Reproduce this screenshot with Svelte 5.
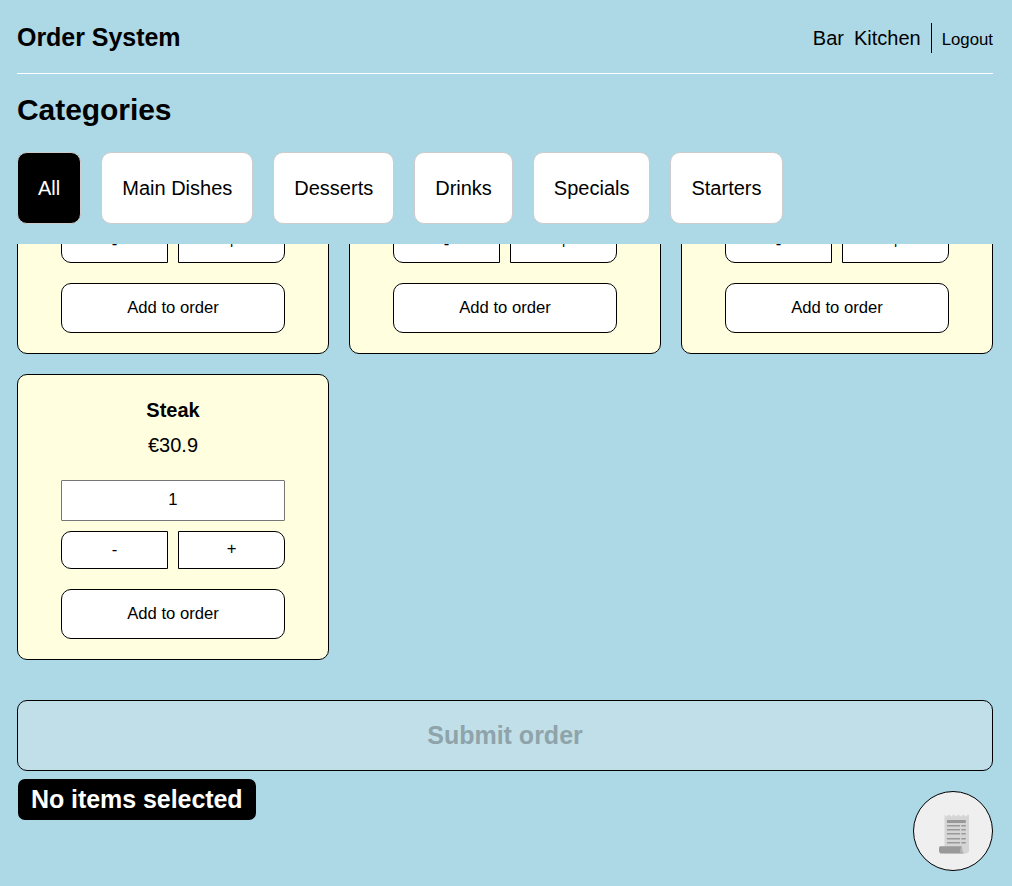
<script>
  const categories = ['All', 'Main Dishes', 'Desserts', 'Drinks', 'Specials', 'Starters'];
  let selected = $state('All');
  let items = $state([
    { id: 1 },
    { id: 2 },
    { id: 3 },
    { id: 4, name: 'Steak', price: 30.9, quantity: 1 }
  ]);
  const rules = [11, 15, 19, 24, 28];
</script>

<div class="page">
  <header>
    <h1>Order System</h1>
    <nav>
      <a href="#bar">Bar</a>
      <a href="#kitchen">Kitchen</a>
      <button class="logout">Logout</button>
    </nav>
  </header>

  <h2>Categories</h2>
  <div class="categories">
    {#each categories as c}
      <button class="category" class:active={selected === c} onclick={() => (selected = c)}>{c}</button>
    {/each}
  </div>

  <main>
    <div class="grid">
      {#each items as item (item.id)}
        <article>
          {#if item.name}
            <h3>{item.name}</h3>
            <p>€{item.price}</p>
            <input type="text" bind:value={item.quantity} />
          {/if}
          <div class="steps">
            <button class="minus">-</button>
            <button class="plus">+</button>
          </div>
          <button class="add">Add to order</button>
        </article>
      {/each}
    </div>
  </main>

  <button class="submit" disabled>Submit order</button>
  <footer>
    <strong>No items selected</strong>
    <button class="receipt">
      <svg width="30" height="40" viewBox="0 0 30 40">
        <path d="M5.5 0.6l2 2 2.4-2 2.4 2 2.4-2 2.4 2 2.4-2 2.4 2 2.4-2 2.4 2 2.4-2 1.0.6V36q0 3.6-3.8 3.6H5.5z" fill="#d5d5d5" />
        <path d="M1.4 32.2h21.2v4q0 2 1.4 3.4H2.5Q0 39.6 0 36.5v-2.8q0-1.5 1.4-1.5z" fill="#999" />
        <path d="M22 32.2q1.2 0 1.2 2.3 0 3.4 2 5.1h-2.9q-1.3-1-1.3-3z" fill="#b5b5b5" />
        <path d="M8 6h18.8v3H8z" fill="#999" />
        {#each rules as y}
          <path d="M8 {y}h13v1.4H8zM22.3 {y}h4.5v1.4h-4.5z" fill="#999" />
        {/each}
      </svg>
    </button>
  </footer>
</div>

<style>
  :global(body) { margin: 0; background: #add8e6; }
  * { box-sizing: border-box; }
  .page {
    height: 886px;
    padding: 0 19px 0 17px;
    display: flex;
    flex-direction: column;
    font-family: "Liberation Sans", Arial, sans-serif;
    font-size: 20px;
    color: #000;
    overflow: hidden;
  }
  h1, h2, h3, p { margin: 0; }
  button, input { font-family: inherit; color: #000; margin: 0; }
  header {
    height: 74px;
    border-bottom: 1px solid #fff;
    display: flex;
    justify-content: space-between;
    align-items: center;
    flex: none;
    padding-top: 3px;
  }
  h1 { font-size: 25px; line-height: 30px; padding-bottom: 3px; letter-spacing: -0.04px; }
  nav { display: flex; align-items: center; gap: 10px; }
  nav a { color: #000; text-decoration: none; line-height: 30px; }
  .logout {
    border: 0;
    border-left: 1px solid #000;
    background: none;
    height: 30px;
    padding: 4px 0 0 10px;
    font-size: 16.8px;
  }
  h2 { font-size: 30px; line-height: 36px; height: 36px; margin: 18px 0 24px; flex: none; letter-spacing: -0.06px; }
  .categories { display: flex; gap: 20px; flex: none; }
  .category {
    height: 72px;
    padding: 0 20px;
    border: 1px solid #ccc;
    border-radius: 10px;
    background: #fff;
    font-size: 20px;
  }
  .category.active { background: #000; color: #fff; }
  main {
    height: 416px;
    margin: 20px 0 40px;
    flex: none;
    display: flex;
    flex-direction: column;
    justify-content: flex-end;
    overflow: hidden;
  }
  .grid { display: grid; grid-template-columns: repeat(3, 1fr); gap: 20px; }
  article {
    height: 286px;
    padding: 20px 43px;
    border: 1px solid #000;
    border-radius: 10px;
    background: #ffffe0;
    display: flex;
    flex-direction: column;
    justify-content: flex-end;
    text-align: center;
  }
  h3 { font-size: 20px; line-height: 30px; margin-bottom: 5px; }
  p { line-height: 30px; margin-bottom: 20px; }
  input {
    width: 100%;
    height: 41px;
    border: 1px solid #767676;
    border-radius: 1px;
    background: #fff;
    padding: 0 0 2px;
    text-align: center;
    font-size: 16.67px;
    margin-bottom: 10px;
  }
  .steps { display: grid; grid-template-columns: 1fr 1fr; gap: 10px; margin-bottom: 20px; }
  .steps button, .add { border: 1px solid #000; background: #fff; font-size: 16.67px; padding: 0 0 1px; }
  .steps button { height: 38px; }
  .minus { border-radius: 10px 0 0 10px; }
  .steps .plus { border-radius: 0 10px 10px 0; padding-bottom: 3px; }
  .add { height: 50px; border-radius: 10px; }
  .submit {
    height: 71px;
    flex: none;
    border: 1px solid #000;
    border-radius: 10px;
    background: #c1dfe8;
    color: #8fa3aa;
    font-size: 25px;
    font-weight: bold;
  }
  footer { display: flex; justify-content: space-between; align-items: flex-start; padding: 8px 0 0 1px; }
  strong {
    height: 41px;
    padding: 0 13px;
    line-height: 40px;
    font-size: 25px;
    letter-spacing: -0.06px;
    border-radius: 7px;
    background: #000;
    color: #fff;
  }
  .receipt {
    width: 80px;
    height: 80px;
    margin-top: 12px;
    padding: 6px 0 0 2px;
    border: 1px solid #000;
    border-radius: 50%;
    background: #efefef;
    display: flex;
    align-items: center;
    justify-content: center;
  }
</style>
